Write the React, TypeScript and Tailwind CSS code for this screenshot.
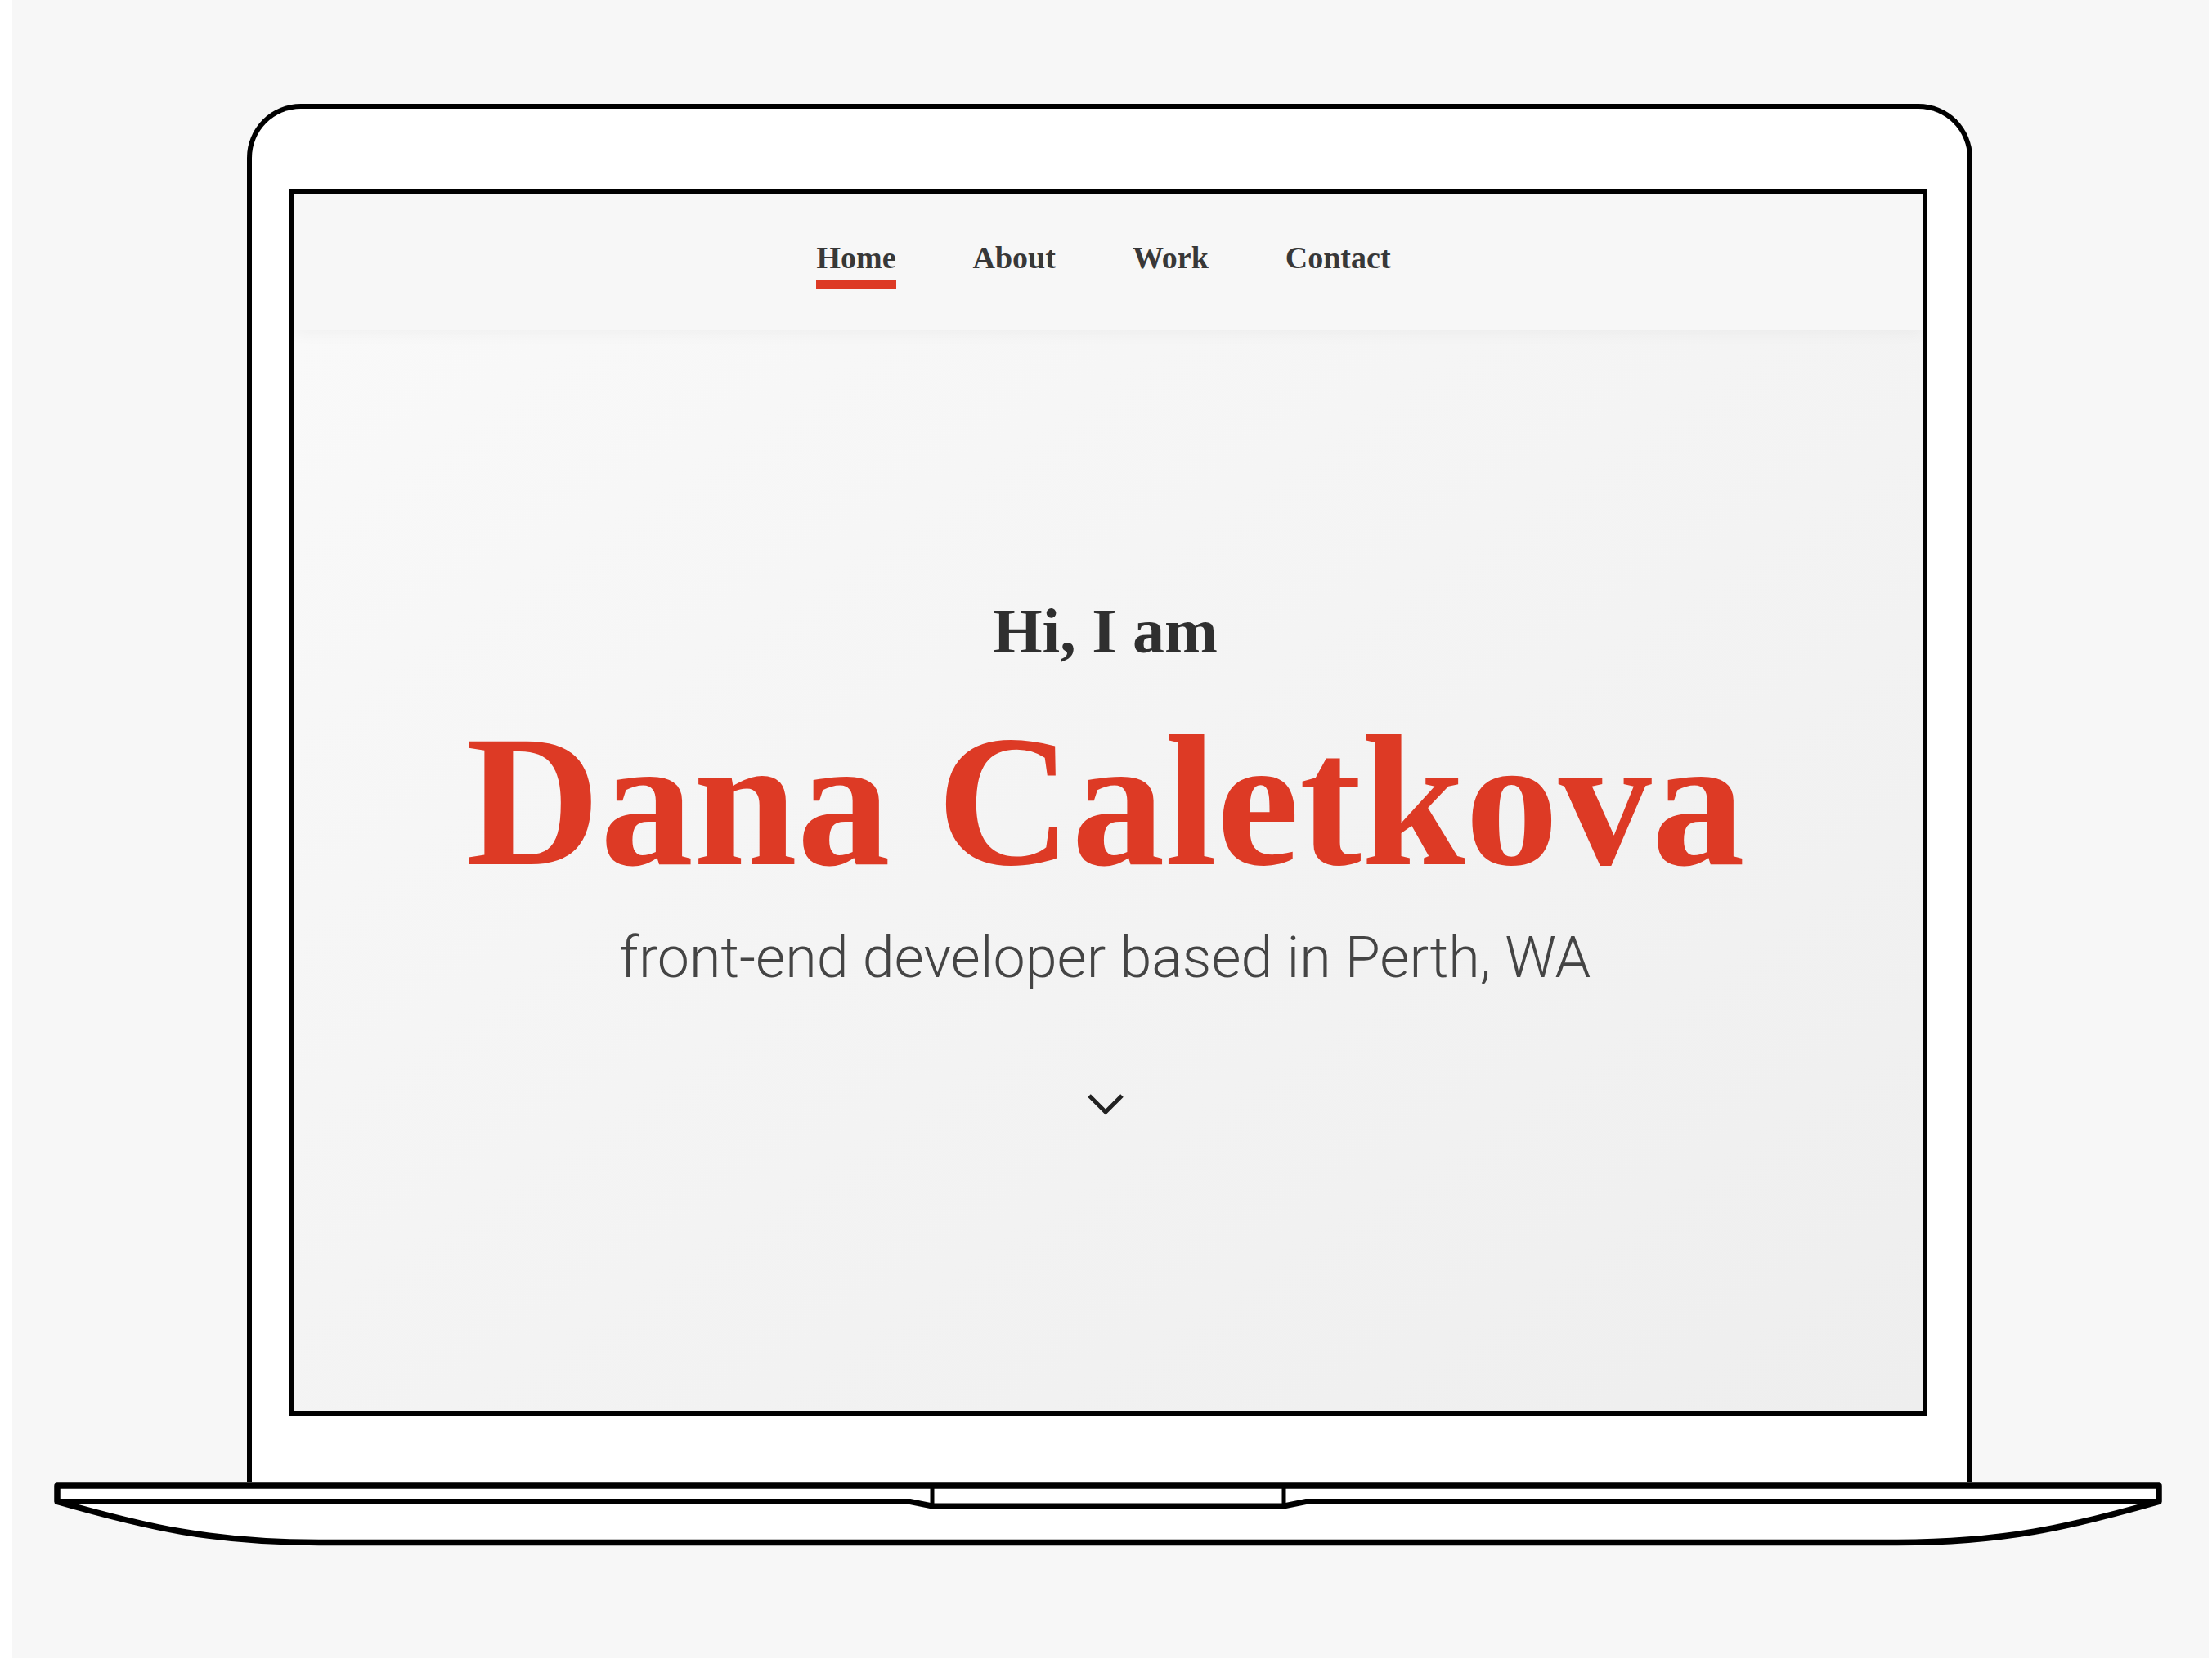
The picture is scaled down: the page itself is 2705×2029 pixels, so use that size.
const navItems = ['Home', 'About', 'Work', 'Contact']

const LaptopBase = () => (
  <svg className="ml-[45px] block" width="2590" height="80" viewBox="0 0 2590 80" fill="none">
    <path
      d="M10 4 H2580 V23.5 C2470 55 2390 73.5 2260 73.5 H330 C200 73.5 120 55 10 23.5 Z"
      fill="#fff"
      stroke="#000"
      strokeWidth="7.5"
      strokeLinejoin="round"
    />
    <path d="M10 23.5 H1053 L1080 29 H1510 L1537 23.5 H2580" stroke="#000" strokeWidth="7" />
    <path d="M1080 4 V29 M1510 4 V29" stroke="#000" strokeWidth="5" />
  </svg>
)

const Chevron = () => (
  <svg width="56" height="36" viewBox="0 0 56 36" fill="none" className="mt-[126px]">
    <path d="M8 8 L28 28 L48 8" stroke="#222" strokeWidth="5" />
  </svg>
)

export default function App() {
  return (
    <div className="w-[2705px] h-[2029px] bg-white">
      <div className="ml-[15px] w-[2686px] h-[2028px] bg-[#f7f7f7] pt-[127px] flex flex-col items-start">
        <div className="ml-[287px] w-[2110px] h-[1686px] border-[6px] border-b-0 border-black rounded-t-[66px] bg-white pt-[98px] pl-[46px]">
          <div className="w-[2003px] h-[1501px] border-x-[5px] border-y-[6px] border-black bg-[#f7f7f7] flex flex-col overflow-hidden">
            <nav className="relative z-10 h-[166px] shrink-0 bg-[#f7f7f7] shadow-[0_6px_18px_rgba(0,0,0,0.035)] flex justify-center gap-[94px] pt-[59px] pr-[12px] font-['Liberation_Serif','Times_New_Roman',serif]">
              {navItems.map((item, i) => (
                <div key={item} className="flex flex-col">
                  <span className="text-[38px] leading-none font-bold text-[#383838]">{item}</span>
                  {i === 0 && <span className="mt-[8px] h-[12px] bg-[#dd3a25]" />}
                </div>
              ))}
            </nav>

            <section className="flex-1 bg-linear-to-br from-[#f9f9f9] to-[#eeeeee] flex flex-col items-center pt-[330px] pr-[8px]">
              <h2 className="text-[78px] leading-none font-bold text-[#2f2f2f] font-['Liberation_Serif','Times_New_Roman',serif]">
                Hi, I am
              </h2>
              <h1 className="mt-[55px] text-[228px] leading-none font-bold text-[#dd3a25] font-['Liberation_Serif','Times_New_Roman',serif]">
                Dana Caletkova
              </h1>
              <p className="mt-[42px] text-[70px] leading-none font-light text-[#444] font-['Roboto','Liberation_Sans',sans-serif]">
                front-end developer based in Perth, WA
              </p>
              <Chevron />
            </section>
          </div>
        </div>
        <LaptopBase />
      </div>
    </div>
  )
}
